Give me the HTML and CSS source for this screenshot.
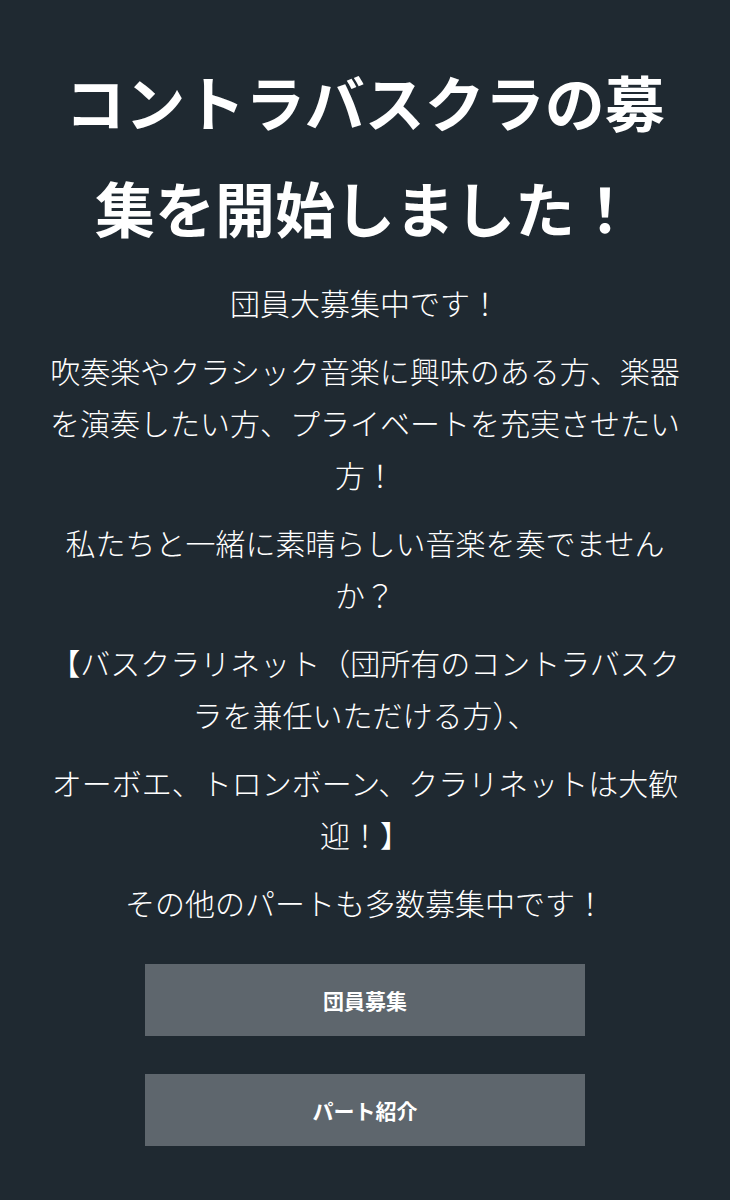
FILE: index.html
```html
<!DOCTYPE html>
<html lang="ja">
  <head>
    <meta charset="UTF-8" />
    <title>団員募集</title>
    <link rel="stylesheet" href="styles.css">
  </head>
  <body>
    <div class="news">
      <h1>コントラバスクラの募集を開始しました！</h1>

      <p>団員大募集中です！</p>
      <p>吹奏楽やクラシック音楽に興味のある方、楽器を演奏したい方、プライベートを充実させたい方！</p>
      <p>私たちと一緒に素晴らしい音楽を奏でませんか？</p>
      <p>【バスクラリネット（団所有のコントラバスクラを兼任いただける方）、</p>
      <p>オーボエ、トロンボーン、クラリネットは大歓迎！】</p>
      <p>その他のパートも多数募集中です！</p>

      <div class="links">
        <a class="button" href="#">団員募集</a>
        <a class="button" href="#">パート紹介</a>
      </div>
    </div>
  </body>
</html>
```

FILE: styles.css
```css
body {
  margin: 0;
  background: #1f2931;
  color: #fff;
  font-family: "Noto Sans CJK JP", "Noto Sans", sans-serif;
}

.news {
  padding: 48px 45px 40px;
  text-align: center;
}

h1 {
  margin: 0 0 2px;
  font-size: 60px;
  line-height: 106px;
  font-weight: bold;
}

p {
  margin: 16px 0 0;
  font-size: 30px;
  line-height: 52px;
  font-weight: 300;
}

.links {
  margin-top: 36px;
  display: flex;
  flex-direction: column;
  align-items: center;
  gap: 38px;
}

.button {
  display: flex;
  align-items: center;
  justify-content: center;
  width: 440px;
  height: 72px;
  background: #5e666d;
  color: #fff;
  font-size: 21px;
  font-weight: bold;
  text-decoration: none;
}
```
